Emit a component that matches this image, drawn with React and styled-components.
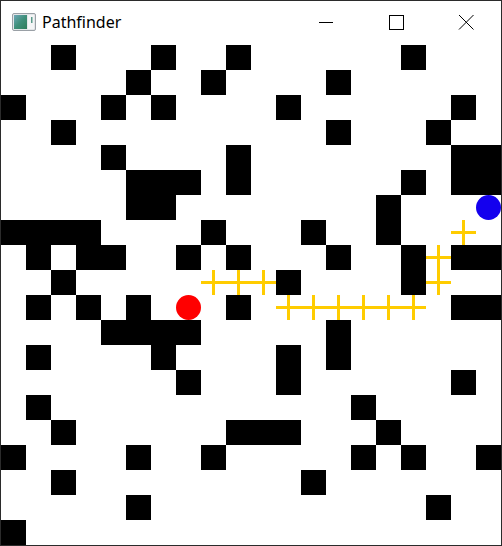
import styled, { createGlobalStyle } from "styled-components";

const GlobalStyle = createGlobalStyle`
* { box-sizing: border-box; }
body { margin: 0; background: #fff; font-family: "Segoe UI", "Noto Sans", sans-serif; }
`

const COLS = 20
const ROWS = 20

// walls per row, by column
const walls = [
    [2, 6, 9, 16],
    [5, 8, 13],
    [0, 4, 6, 11, 18],
    [2, 13, 17],
    [4, 9, 18, 19],
    [5, 6, 7, 9, 16, 18, 19],
    [5, 6, 15],
    [0, 1, 2, 3, 8, 12, 15],
    [1, 3, 4, 7, 9, 13, 16, 18, 19],
    [2, 11, 16],
    [1, 3, 5, 9, 18, 19],
    [4, 5, 6, 7, 13],
    [1, 6, 11, 13],
    [7, 11, 18],
    [1, 14],
    [2, 9, 10, 11, 15],
    [0, 5, 8, 14, 16, 19],
    [2, 12],
    [5, 17],
    [0],
]

const path = {
    7: [18],
    8: [17],
    9: [8, 9, 10, 17],
    10: [11, 12, 13, 14, 15, 16],
}

const start = { row: 10, col: 7 }
const end = { row: 6, col: 19 }

function cellType(row, col) {
    if (row === start.row && col === start.col) return "start"
    if (row === end.row && col === end.col) return "end"
    if (walls[row].includes(col)) return "wall"
    if (path[row] && path[row].includes(col)) return "path"
    return "empty"
}

function AppIcon() {
    return (
        <svg width="24" height="22" viewBox="0 0 24 22">
            <defs>
                <linearGradient id="pane" x1="0" y1="0" x2="1" y2="1">
                    <stop offset="0" stopColor="#6fa8b8" />
                    <stop offset="0.5" stopColor="#3f8f7a" />
                    <stop offset="1" stopColor="#2f7d5a" />
                </linearGradient>
            </defs>
            <rect x="0.5" y="2.5" width="23" height="17" rx="1.5" fill="#e4e6e8" stroke="#9aa0a6" />
            <rect x="2" y="4" width="13" height="14" fill="url(#pane)" />
            <rect x="16" y="4" width="6" height="14" fill="#f4f5f6" />
            <rect x="19" y="6" width="1.5" height="6" fill="#5a9a8a" />
        </svg>
    )
}

export default function App() {
    const cells = []
    for (let r = 0; r < ROWS; r++) {
        for (let c = 0; c < COLS; c++) {
            const type = cellType(r, c)
            cells.push(
                <Cell key={`${r}-${c}`} tipo={type}>
                    {type === "path" && <Cross />}
                    {(type === "start" || type === "end") && <Dot cor={type === "start" ? "#ff0000" : "#1400ee"} />}
                </Cell>
            )
        }
    }

    return (
        <>
            <GlobalStyle />
            <Janela>
                <TitleBar>
                    <TitleLeft>
                        <AppIcon />
                        <Titulo>Pathfinder</Titulo>
                    </TitleLeft>
                    <Controls>
                        <ControlButton>
                            <svg width="16" height="16" viewBox="0 0 16 16">
                                <line x1="1" y1="8.5" x2="15" y2="8.5" stroke="#000" strokeWidth="1" />
                            </svg>
                        </ControlButton>
                        <ControlButton>
                            <svg width="16" height="16" viewBox="0 0 16 16">
                                <rect x="1.5" y="1.5" width="14" height="14" fill="none" stroke="#000" strokeWidth="1" />
                            </svg>
                        </ControlButton>
                        <ControlButton>
                            <svg width="16" height="16" viewBox="0 0 16 16">
                                <path d="M1 1 L15.5 15.5 M15.5 1 L1 15.5" stroke="#000" strokeWidth="1" />
                            </svg>
                        </ControlButton>
                    </Controls>
                </TitleBar>
                <Grade>{cells}</Grade>
            </Janela>
        </>
    )
}

const Janela = styled.div`
width: 502px;
height: 546px;
border: 1px solid #2b2b2b;
display: flex;
flex-direction: column;
background: #fff;
`
const TitleBar = styled.div`
height: 44px;
display: flex;
align-items: center;
justify-content: space-between;
padding: 0 0 0 11px;
`
const TitleLeft = styled.div`
display: flex;
align-items: center;
gap: 6px;
margin-top: -2px;
`
const Titulo = styled.span`
font-size: 16px;
color: #000;
`
const Controls = styled.div`
display: flex;
height: 100%;
`
const ControlButton = styled.div`
width: 70px;
height: 100%;
display: flex;
align-items: center;
justify-content: center;
padding-bottom: 2px;
`
const Grade = styled.div`
display: grid;
grid-template-columns: repeat(20, 25px);
grid-template-rows: repeat(20, 25px);
width: 500px;
height: 500px;
`
const Cell = styled.div`
position: relative;
background-color: ${props => props.tipo === "wall" ? "#000" : "#fff"};
display: flex;
align-items: center;
justify-content: center;
`
const Cross = styled.div`
position: absolute;
inset: 0;
&::before, &::after {
content: "";
position: absolute;
background: #ffcc00;
}
&::before {
left: 0;
right: 0;
top: 11px;
height: 3px;
}
&::after {
top: 0;
bottom: 0;
left: 11px;
width: 3px;
}
`
const Dot = styled.div`
width: 25px;
height: 25px;
border-radius: 50%;
background-color: ${props => props.cor};
`
